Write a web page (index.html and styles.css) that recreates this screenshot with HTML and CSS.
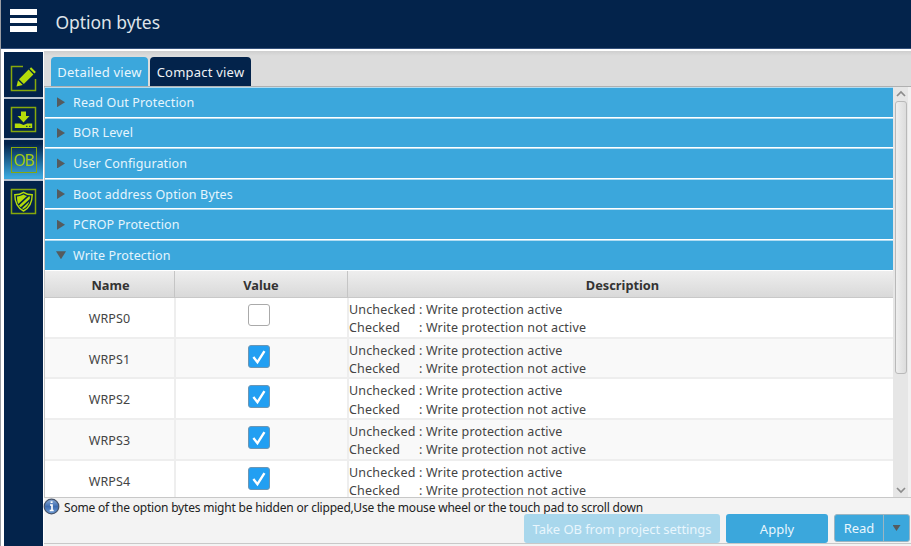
FILE: index.html
```html
<!DOCTYPE html>
<html lang="en">
<head>
<meta charset="utf-8">
<title>Option bytes</title>
<link rel="stylesheet" href="styles.css">
</head>
<body>
<div class="app">
  <header class="topbar">
    <div class="burger"><i></i><i></i><i></i></div>
    <h1>Option bytes</h1>
  </header>
  <div class="body">
    <nav class="side">
      <div class="nav-item">
        <svg width="27" height="27" viewBox="0 0 27 27"><path d="M13 1.500H1.500v24h24V14" fill="none" stroke="#86a80c" stroke-width="1.5"/><path d="M6.500 21.500L8 15.200l4.800 4.800zM9 14.200L18.600 4.600l4.800 4.800L13.800 19zM19.600 3.700l1.500-1.500 4.800 4.800-1.500 1.500z" fill="#b4dc0a"/></svg>
      </div>
      <div class="nav-item">
        <svg width="27" height="27" viewBox="0 0 27 27"><rect x="1.500" y="1.500" width="24" height="24" fill="none" stroke="#86a80c" stroke-width="1.5"/><path d="M11 5.500h5V10h3.500l-6 6.500-6-6.500H11z" fill="#b4dc0a"/><path d="M4.800 17.500h5l3.700 1.500 3.700-1.500h5V22H4.800z" fill="#b4dc0a"/><path d="M16 20.300h1.500M19 20.300h1.500" stroke="#03234b"/></svg>
      </div>
      <div class="nav-item active">
        <div class="ob">OB</div>
      </div>
      <div class="nav-item last">
        <svg width="27" height="27" viewBox="0 0 27 27"><rect x="1.500" y="1.500" width="24" height="24" fill="none" stroke="#86a80c" stroke-width="1.5"/><path d="M13.500 4.300C10.500 6.300 7.500 6.800 4.800 6.800 4.800 14 6.500 19.500 13.500 23c7-3.500 8.700-9 8.700-16.200-2.700 0-5.700-.5-8.700-2.500z" fill="none" stroke="#b4dc0a" stroke-width="1.400"/><path d="M7 8.500c2.500-.2 4.500-.8 6.500-2 1.200.7 2.300 1.200 3.500 1.500L8.200 16C7.200 13.500 7 11 7 8.500zM9 17.500L18.700 8.400l1.300.1-.3 2.500-9 8.300zM12 20.200l7.300-6.700c-.8 3.200-2.600 5.500-5.800 7.500z" fill="#b4dc0a"/></svg>
      </div>
    </nav>
    <main class="main">
      <div class="tabs"><div class="tab on"><span>Detailed view</span></div><div class="tab"><span>Compact view</span></div></div>
      <div class="scroll">
        <div class="list">
          <div class="sec"><b></b><span>Read Out Protection</span></div>
          <div class="sec"><b></b><span>BOR Level</span></div>
          <div class="sec"><b></b><span>User Configuration</span></div>
          <div class="sec"><b></b><span>Boot address Option Bytes</span></div>
          <div class="sec"><b></b><span>PCROP Protection</span></div>
          <div class="sec open"><b></b><span>Write Protection</span></div>
          <div class="row head"><div>Name</div><div>Value</div><div>Description</div></div>
          <div class="row"><div class="name">WRPS0</div><div class="val"><i class="box"></i></div><div class="desc"><p><span>Unchecked</span>: Write protection active</p><p><span>Checked</span>: Write protection not active</p></div></div>
          <div class="row alt"><div class="name">WRPS1</div><div class="val"><i class="box ck"><svg viewBox="0 0 22 23"><path d="M4.800 12L9.300 17.800 17 5.500" /></svg></i></div><div class="desc"><p><span>Unchecked</span>: Write protection active</p><p><span>Checked</span>: Write protection not active</p></div></div>
          <div class="row"><div class="name">WRPS2</div><div class="val"><i class="box ck"><svg viewBox="0 0 22 23"><path d="M4.800 12L9.300 17.800 17 5.500" /></svg></i></div><div class="desc"><p><span>Unchecked</span>: Write protection active</p><p><span>Checked</span>: Write protection not active</p></div></div>
          <div class="row alt"><div class="name">WRPS3</div><div class="val"><i class="box ck"><svg viewBox="0 0 22 23"><path d="M4.800 12L9.300 17.800 17 5.500" /></svg></i></div><div class="desc"><p><span>Unchecked</span>: Write protection active</p><p><span>Checked</span>: Write protection not active</p></div></div>
          <div class="row"><div class="name">WRPS4</div><div class="val"><i class="box ck"><svg viewBox="0 0 22 23"><path d="M4.800 12L9.300 17.800 17 5.500" /></svg></i></div><div class="desc"><p><span>Unchecked</span>: Write protection active</p><p><span>Checked</span>: Write protection not active</p></div></div>
        </div>
        <div class="bar">
          <svg width="14" height="14" viewBox="0 0 14 14"><path d="M3 9l4-4 4 4"/></svg>
          <div class="thumb"></div>
          <svg width="14" height="14" viewBox="0 0 14 14"><path d="M3 5l4 4 4-4"/></svg>
        </div>
      </div>
      <footer class="foot">
        <div class="note">
          <svg width="17" height="17" viewBox="0 0 17 17"><defs><linearGradient id="g" x1="0" y1="0" x2="0" y2="1"><stop offset="0" stop-color="#8bacd8"/><stop offset=".5" stop-color="#3d6cb0"/><stop offset="1" stop-color="#6d9bd4"/></linearGradient></defs><circle cx="8.500" cy="8.500" r="7.300" fill="url(#g)" stroke="#45536a" stroke-width="1.200"/><path d="M7 7h2v5.500M6.700 12.500h4M7.600 4.200h2" stroke="#fff" stroke-width="1.700" fill="none"/></svg>
          <span>Some of the option bytes might be hidden or clipped,Use the mouse wheel or the touch pad to scroll down</span>
        </div>
        <div class="btns">
          <div class="btn off"><span>Take OB from project settings</span></div>
          <div class="btn apply"><span>Apply</span></div>
          <div class="split"><div><span>Read</span></div><div class="arrow"><b></b></div></div>
        </div>
      </footer>
    </main>
  </div>
</div>
</body>
</html>
```
FILE: styles.css
```css
* { box-sizing: border-box; }
body { margin: 0; background: #fff; font-family: "Noto Sans", sans-serif; font-size: 12.5px; color: #444; overflow: hidden; }
p, h1 { margin: 0; }
.app { width: 911px; height: 546px; display: flex; flex-direction: column; border-left: 1px solid #9a9da3; white-space: nowrap; }
.topbar { height: 49px; flex: none; background: #03234b; display: flex; border-bottom: 1px solid #34507a; }
.burger { width: 27px; margin: 9px 0 0 9px; display: flex; flex-direction: column; gap: 3px; }
.burger i { height: 5.600px; background: #fff; }
h1 { margin-left: 18.500px; font-size: 17.500px; letter-spacing: -.05px; line-height: 24px; padding-top: 10px; font-weight: 400; color: #dfe3e9; }
.body { flex: 1; display: flex; min-height: 0; padding: 2px 0 0 3px; }
.side { width: 39px; flex: none; background: #03234b; margin-top: 1px; }
.nav-item { height: 41px; padding: 1px 0 0 6px; border-bottom: 2px solid #b9c2ce; }
.nav-item:first-child { height: 47px; padding-top: 13px; }
.nav-item svg { display: block; }
.nav-item.active { background: linear-gradient(#03234b 10%, #3ba7dc 95%); padding: 7px 0 0 7px; }
.nav-item:nth-child(2) { padding-top: 7px; }
.nav-item.last { border: 0; padding-top: 7px; }
.ob { width: 26px; height: 26px; border: 1.500px solid #86a80c; color: #a3cb10; font-size: 15.500px; line-height: 24px; letter-spacing: -1px; text-indent: -1px; text-align: center; }
.main { flex: 1; min-width: 0; margin-left: 1px; display: flex; flex-direction: column; background: #f3f3f3; }
.tabs { height: 36px; flex: none; background: linear-gradient(#cfcfcf, #dcdcdc 5px); border-bottom: 1px solid #b0b0b0; padding: 6px 0 0 7px; display: flex; gap: 2px; }
.tab { height: 29px; width: 97px; background: #03234b; color: #eef1f5; border-radius: 4px 4px 0 0; display: flex; justify-content: center; font-size: 13px; letter-spacing: .22px; line-height: 31px; }
.tab + .tab { width: 101px; }
.tab.on { background: #3ba7dc; color: #e9f6fd; }
.scroll { height: 411px; flex: none; display: flex; border-bottom: 1px solid #c8c8c8; border-left: 1px solid #c5c5c5; }
.list { width: 848px; overflow: hidden; background: #fff; }
.sec { height: 30.600px; border-top: 1px solid #b0dcf2; border-bottom: 1px solid #fff; background: #3ba7dc; color: #e6f5fd; display: flex; align-items: center; padding-left: 12px; letter-spacing: .14px; }
.sec b { width: 8px; height: 10px; background: #555b5e; clip-path: polygon(0 0, 100% 50%, 0 100%); margin-right: 8px; }
.sec.open b { width: 10px; height: 8px; margin: 0 7px 0 -1px; clip-path: polygon(0 0, 100% 0, 50% 100%); }
.row { height: 40.750px; display: grid; grid-template-columns: 129px 173px 1fr; border-bottom: 2px solid #eee; background: #fff; }
.row > div + div { border-left: 2px solid #eee; }
.alt { background: #f9f9f9; }
.head { height: 27.400px; background: linear-gradient(#eee, #d9d9d9); border-bottom: 1px solid #c8c8c8; font-weight: 700; color: #333; text-align: center; line-height: 29px; font-size: 12.800px; }
.row.head > div + div { border-left: 1px solid #c5c5c5; }
.head > div:last-child { padding-left: 4px; }
.head > div:first-child { padding-left: 2px; }
.name { text-align: center; line-height: 42px; letter-spacing: .15px; }
.val { display: flex; justify-content: center; padding: 6px 5px 0 0; }
.box { width: 22px; height: 22px; border: 1.500px solid #aaa; border-radius: 3px; background: #fff; }
.box.ck { height: 23px; background: #229ff2; border-color: #6c96b4; }
.box svg { display: block; width: 20px; height: 21px; }
.box path { fill: none; stroke: #fff; stroke-width: 2.600; }
.desc { line-height: 18px; padding: 3px 0 0 0; letter-spacing: .16px; }
.desc p { height: 18.200px; }
.desc span { display: inline-block; width: 70px; }
.bar { flex: 1; background: #e6e6e6; border-right: 3px solid #f1f1f1; display: flex; flex-direction: column; align-items: center; }
.bar path { fill: none; stroke: #8c8c8c; stroke-width: 1.700; }
.thumb { width: 12px; height: 273px; margin-bottom: auto; border: 1px solid #b9b9b9; border-radius: 3px; background: linear-gradient(90deg, #efefef, #dcdcdc); }
.foot { flex: 1; }
.note { height: 16px; display: flex; align-items: center; gap: 4px; color: #222; font-size: 12px; letter-spacing: -.2px; }
.note svg { margin-left: -1px; }
.note span { padding-top: 2px; }
.btns { height: 30px; border-bottom: 1px solid #c8c8c8; display: flex; justify-content: flex-end; gap: 6px; padding-right: 1px; color: #e9f6fd; font-size: 13px; }
.btn { height: 29px; background: #3ba7dc; border-radius: 3px; display: flex; align-items: center; justify-content: center; }
.off { width: 196px; background: #a8d7ec; letter-spacing: -.06px; }
.apply { width: 102px; }
.split { height: 28px; width: 76px; display: flex; background: #3ba7dc; border: 1px solid #9bb5c2; border-radius: 3px; align-items: center; }
.split > div:first-child { width: 48px; text-align: center; }
.arrow { flex: 1; height: 100%; border-left: 1px solid #9bb5c2; display: flex; align-items: center; justify-content: center; }
.arrow b { width: 8px; height: 6px; background: #555b5e; clip-path: polygon(0 0, 100% 0, 50% 100%); }
```
